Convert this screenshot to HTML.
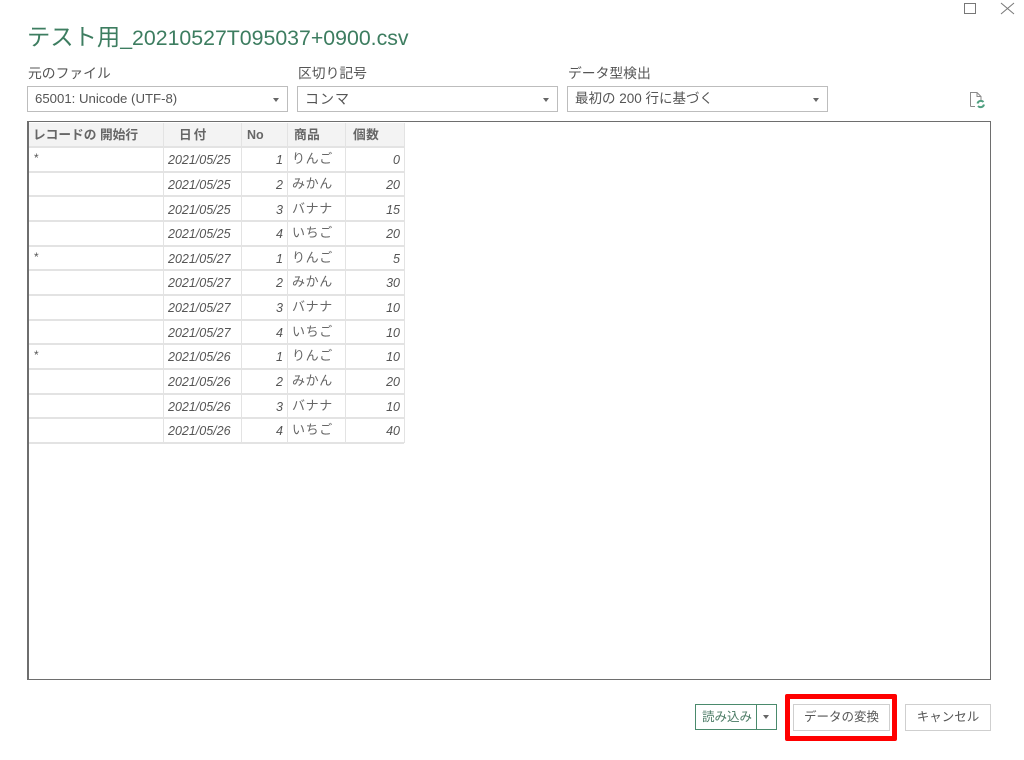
<!DOCTYPE html>
<html lang="ja"><head><meta charset="utf-8"><title>テスト用</title>
<style>
html,body{margin:0;padding:0;background:#fff}
body{width:1024px;height:760px;position:relative;overflow:hidden;font-family:"Liberation Sans","Noto Sans CJK JP",sans-serif;color:#555}
.a{position:absolute;white-space:nowrap}
.txt,.lab,.h,.row,.sel span,.btn{filter:blur(.3px)}
.lab{font-size:13.8px;line-height:18px;top:65px;color:#555}
.sel{top:86px;height:24px;background:#fff;border:1px solid #bdbdbd;box-sizing:content-box;font-size:13.2px;line-height:24px;color:#555}
.sel span{position:absolute;left:7px;top:0}
.sel i{position:absolute;width:0;height:0;border:3.5px solid transparent;border-top:4px solid #666;border-bottom:0;top:11px}
.grid{left:27px;top:121px;width:961px;height:557px;border:1px solid #6e6e6e;border-left-width:2px;background:#fff}
.hd{left:29px;top:123px;width:375px;height:24px;background:#f3f3f3}
.h{top:125px;font-size:12.7px;line-height:20px;font-weight:bold;color:#666}
.v{width:1px;background:#e3e3e3;top:123px;height:320px}
.r{position:absolute;left:29px;width:375px;height:2px;background:#e3e3e3}
.row{position:absolute;left:0;width:420px;height:20px;font-size:12.5px;line-height:20px;color:#555}
.row b{position:absolute;font-weight:normal;top:1px}
.row b.s{left:34px;font-size:12px;top:-1px}
.d{left:168px;font-style:italic}
.n{right:137px;font-style:italic;font-size:12.5px}
.row b.t{left:292px;font-size:13px;letter-spacing:.6px;top:0;color:#666}
.c{right:20px;font-style:italic}
.btn{box-sizing:border-box;background:#fff;font-size:12.5px;text-align:center;color:#555}
</style></head><body>

<svg class="a" style="left:960px;top:0" width="64" height="20" viewBox="0 0 64 20"><rect x="4.5" y="3.5" width="11" height="10" fill="none" stroke="#777"/><path d="M41 3L54 14M54 3L41 14" stroke="#777" fill="none"/></svg>

<div class="a txt" style="left:27px;top:23px;line-height:28px;color:#3d7d60"><span style="font-size:23.3px">テスト用</span><span style="font-size:21.3px">_20210527T095037+0900.csv</span></div>

<div class="a lab" style="left:28px">元のファイル</div>
<div class="a lab" style="left:298px">区切り記号</div>
<div class="a lab" style="left:568px">データ型検出</div>

<div class="a sel" style="left:27px;width:259px"><span>65001: Unicode (UTF-8)</span><i style="left:245px"></i></div>
<div class="a sel" style="left:297px;width:259px"><span style="font-size:14px;letter-spacing:1px">コンマ</span><i style="left:245px"></i></div>
<div class="a sel" style="left:567px;width:259px"><span style="font-size:13.5px">最初の 200 行に基づく</span><i style="left:245px"></i></div>

<svg class="a" style="left:968px;top:90px" width="20" height="20" viewBox="0 0 20 20"><path d="M2.5 16.5V2.5H9L13 6.5V10M9 2.5V6.5H13M2.5 16.5H7" fill="none" stroke="#8a8a8a"/><path d="M9.5 13.5a3.5 3.5 0 0 1 6-1.5M16 14.5a3.5 3.5 0 0 1-6 1.5" fill="none" stroke="#4f9f80" stroke-width="2"/></svg>

<div class="a grid"></div>
<div class="a hd"></div>
<div class="a v" style="left:163px"></div>
<div class="a v" style="left:241px"></div>
<div class="a v" style="left:287px"></div>
<div class="a v" style="left:345px"></div>
<div class="a v" style="left:404px"></div>

<div class="a h" style="left:33px">レコードの 開始行</div>
<div class="a h" style="left:179px;letter-spacing:2px">日付</div>
<div class="a h" style="left:247px;font-size:12.5px">No</div>
<div class="a h" style="left:294px;letter-spacing:.5px">商品</div>
<div class="a h" style="left:353px;letter-spacing:.5px">個数</div>

<div class="r" style="top:146px"></div>
<div class="r" style="top:171px"></div>
<div class="r" style="top:195px"></div>
<div class="r" style="top:220px"></div>
<div class="r" style="top:245px"></div>
<div class="r" style="top:269px"></div>
<div class="r" style="top:294px"></div>
<div class="r" style="top:319px"></div>
<div class="r" style="top:343px"></div>
<div class="r" style="top:368px"></div>
<div class="r" style="top:393px"></div>
<div class="r" style="top:417px"></div>
<div class="r" style="top:442px"></div>

<div class="row" style="top:149px"><b class="s">*</b><b class="d">2021/05/25</b><b class="n">1</b><b class="t">りんご</b><b class="c">0</b></div>
<div class="row" style="top:174px"><b class="d">2021/05/25</b><b class="n">2</b><b class="t">みかん</b><b class="c">20</b></div>
<div class="row" style="top:199px"><b class="d">2021/05/25</b><b class="n">3</b><b class="t">バナナ</b><b class="c">15</b></div>
<div class="row" style="top:223px"><b class="d">2021/05/25</b><b class="n">4</b><b class="t">いちご</b><b class="c">20</b></div>
<div class="row" style="top:248px"><b class="s">*</b><b class="d">2021/05/27</b><b class="n">1</b><b class="t">りんご</b><b class="c">5</b></div>
<div class="row" style="top:272px"><b class="d">2021/05/27</b><b class="n">2</b><b class="t">みかん</b><b class="c">30</b></div>
<div class="row" style="top:297px"><b class="d">2021/05/27</b><b class="n">3</b><b class="t">バナナ</b><b class="c">10</b></div>
<div class="row" style="top:322px"><b class="d">2021/05/27</b><b class="n">4</b><b class="t">いちご</b><b class="c">10</b></div>
<div class="row" style="top:346px"><b class="s">*</b><b class="d">2021/05/26</b><b class="n">1</b><b class="t">りんご</b><b class="c">10</b></div>
<div class="row" style="top:371px"><b class="d">2021/05/26</b><b class="n">2</b><b class="t">みかん</b><b class="c">20</b></div>
<div class="row" style="top:396px"><b class="d">2021/05/26</b><b class="n">3</b><b class="t">バナナ</b><b class="c">10</b></div>
<div class="row" style="top:420px"><b class="d">2021/05/26</b><b class="n">4</b><b class="t">いちご</b><b class="c">40</b></div>

<div class="a btn" style="left:695px;top:704px;width:82px;height:26px;border:1px solid #4a8a6c;line-height:24px;text-align:left;padding-left:6px;color:#4a7a64;filter:none">読み込み</div>
<div class="a" style="left:756px;top:704px;width:1px;height:26px;background:#4a8a6c"></div>
<div class="a" style="left:763px;top:715px;width:0;height:0;border:3.5px solid transparent;border-top:4px solid #666;border-bottom:0"></div>

<div class="a" style="left:785px;top:694px;width:112px;height:47px;box-sizing:border-box;border:5px solid #f00;border-radius:2px"></div>
<div class="a btn" style="left:793px;top:704px;width:97px;height:27px;border:1px solid #cfcfcf;line-height:25px;filter:none">データの変換</div>
<div class="a btn" style="left:905px;top:704px;width:86px;height:27px;border:1px solid #cfcfcf;line-height:25px;filter:none">キャンセル</div>

</body></html>
